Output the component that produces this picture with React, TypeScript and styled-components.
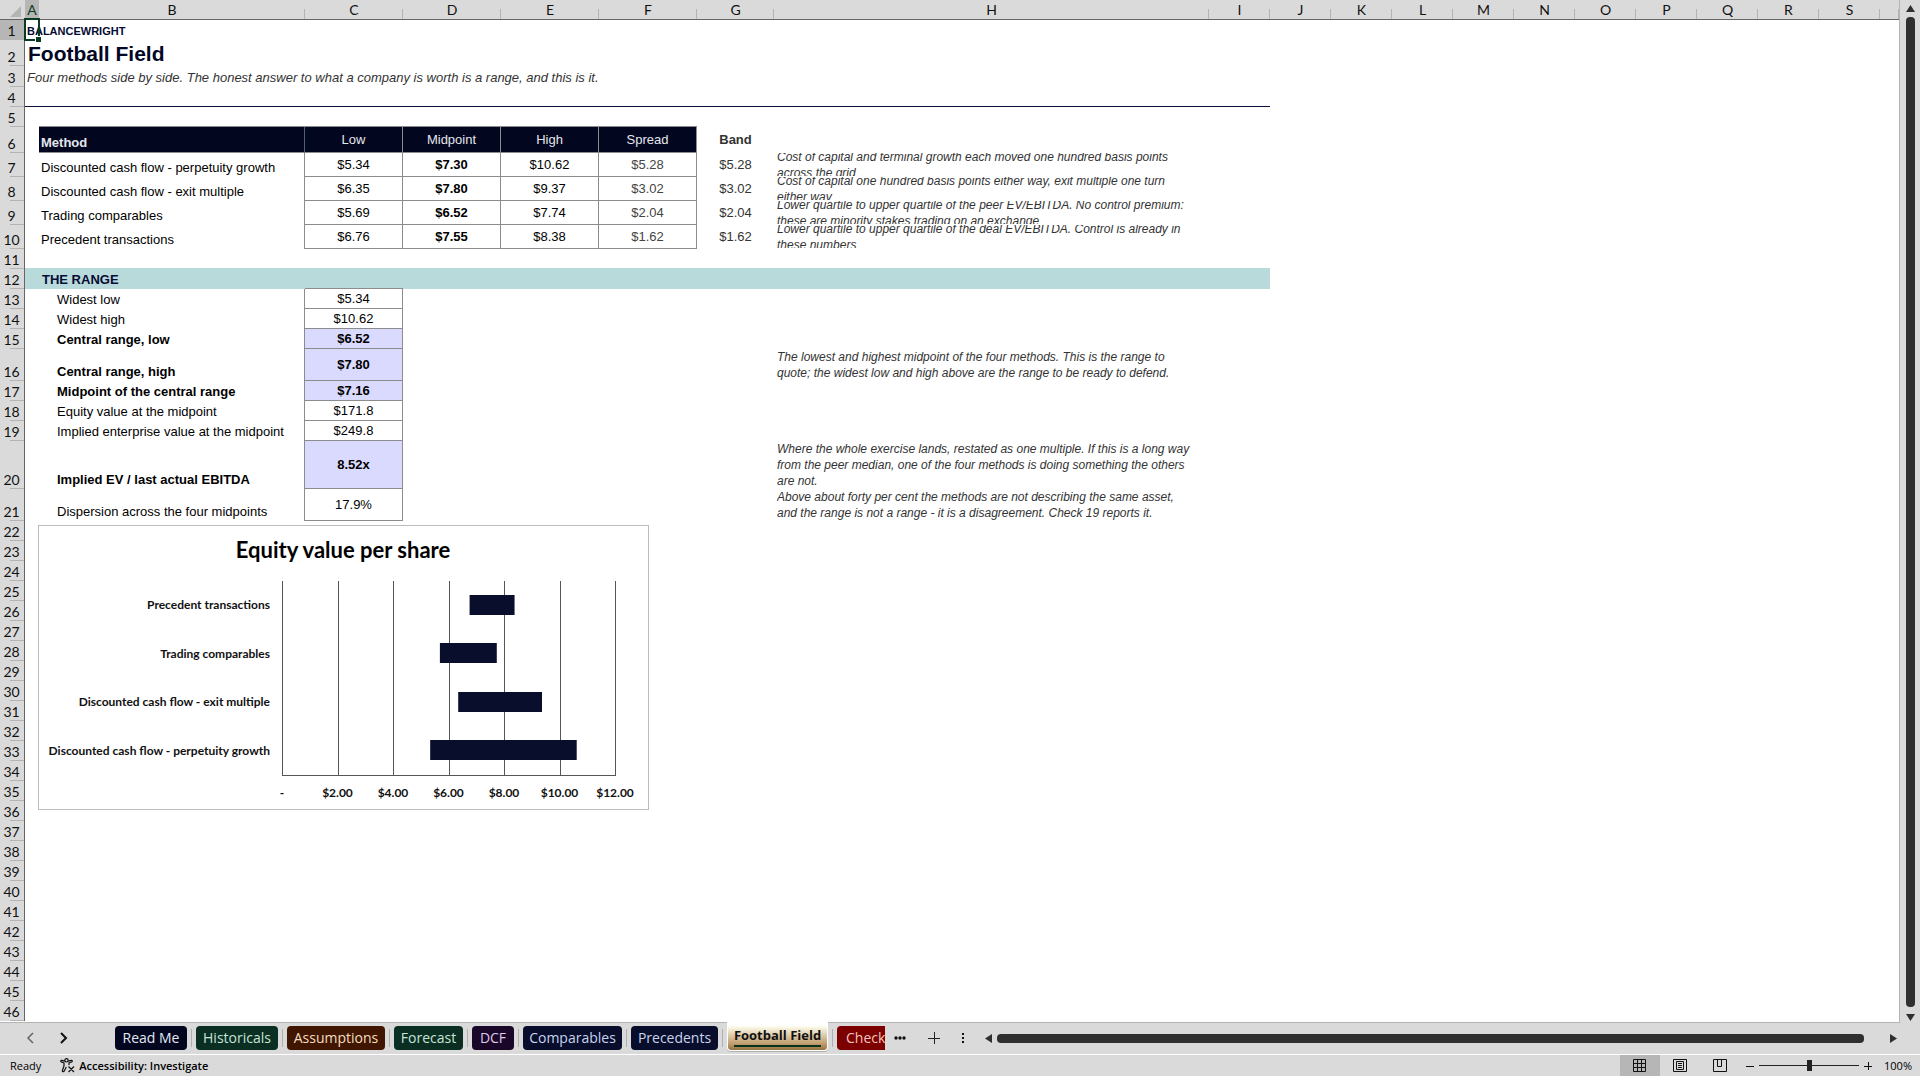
import React from "react";
import styled, { createGlobalStyle, css } from "styled-components";

const SANS = '"Liberation Sans", Arial, sans-serif';
const OFFICE = 'Lato, Calibri, sans-serif';
const UI = '"Open Sans", "Segoe UI", sans-serif';

const GlobalStyle = createGlobalStyle`
  *, *::before, *::after { box-sizing: border-box; }
  body { margin: 0; background: #dadada; color: #000; font-family: ${SANS}; font-size: 13px; }
  button { border: 0; padding: 0; background: none; color: inherit; font: inherit; }
`;

const Window = styled.main`
  display: flex;
  flex-direction: column;
  height: 100vh;
  overflow: hidden;
  background: #dadada;
`;

const Workspace = styled.div`
  display: flex;
  flex: 1;
  min-height: 0;
`;

const Sheet = styled.div`
  position: relative;
  flex: 1;
  min-width: 0;
  overflow: hidden;
  background: #fff;
  border-right: 1px solid #b4b4b4;
  border-bottom: 1px solid #b4b4b4;
`;

const Grid = styled.table`
  width: 100%;
  table-layout: fixed;
  border-collapse: separate;
  border-spacing: 0;
`;

const Col = styled.col<{ $w?: number }>`
  width: ${(p) => (p.$w ? `${p.$w}px` : "auto")};
`;

const ColumnHead = styled.th<{ $active?: boolean }>`
  height: 20px;
  padding: 0;
  border-bottom: 1px solid #666;
  background: ${(p) =>
    p.$active
      ? "#b6b6b6"
      : "linear-gradient(#b4b4b4, #b4b4b4) right bottom / 1px 10px no-repeat #dadada"};
  color: ${(p) => (p.$active ? "#0b3a22" : "#111")};
  font: 400 14px/18px ${OFFICE};
  vertical-align: bottom;
`;

const Corner = styled(ColumnHead)`
  background: #dadada;
  text-align: right;
  svg { display: block; margin: 0 4px 2px auto; }
`;

const RowHead = styled.th<{ $active?: boolean }>`
  padding: 0 1px 0 0;
  border-right: 1px solid #666;
  background: ${(p) =>
    p.$active
      ? "#b6b6b6"
      : "linear-gradient(#b4b4b4, #b4b4b4) right bottom / 14px 1px no-repeat #dadada"};
  color: #111;
  font: 400 14px/18px ${OFFICE};
  text-align: center;
  vertical-align: bottom;
`;

const Row = styled.tr<{ $h: number }>`
  height: ${(p) => p.$h}px;
`;

const Cell = styled.td<{ $indent?: number; $bold?: boolean }>`
  position: relative;
  padding: 0 0 0 ${(p) => p.$indent ?? 2}px;
  font-size: 13px;
  line-height: 18px;
  font-weight: ${(p) => (p.$bold ? 700 : 400)};
  vertical-align: bottom;
  white-space: nowrap;
`;

const BrandCell = styled(Cell)`
  color: #060c34;
  font-size: 11px;
  font-weight: 700;
`;

const TitleCell = styled(Cell)`
  color: #030726;
  font-size: 21px;
  line-height: 24px;
  font-weight: 700;
`;

const SubtitleCell = styled(Cell)`
  color: #333;
  font-style: italic;
`;

const RuleCell = styled.td`
  padding: 0;
  border-bottom: 1px solid #0a0f3c;
`;

const SectionCell = styled(Cell)`
  background: #b8dada;
  box-shadow: 0 -1px 0 #b8dada;
  color: #060c34;
  font-weight: 700;
`;

const boxed = css`
  border-right: 1px solid #8c8c8c;
  border-bottom: 1px solid #8c8c8c;
`;

const TableHead = styled(Cell)<{ $first?: boolean }>`
  ${boxed}
  background: #02061f;
  color: #e6e6ee;
  box-shadow: 0 -1px 0 #8c8c8c;
  ${(p) =>
    p.$first
      ? css`border-right-color: #4d6075;`
      : css`
          padding: 0;
          text-align: center;
          vertical-align: middle;
        `}
`;

const Value = styled(Cell)<{ $tone?: "muted" | "key"; $top?: boolean }>`
  ${boxed}
  padding: 0;
  text-align: center;
  vertical-align: middle;
  background: ${(p) => (p.$tone === "key" ? "#dadafe" : "#fff")};
  color: ${(p) => (p.$tone === "muted" ? "#444" : "#000")};
  box-shadow: -1px 0 0 #8c8c8c${(p) => (p.$top ? ", 0 -1px 0 #8c8c8c" : "")};
`;

const Band = styled(Cell)`
  padding: 0;
  color: #333;
  text-align: center;
  vertical-align: middle;
`;

const NoteCell = styled(Cell)`
  padding: 0 0 0 3px;
  vertical-align: top;
`;

const Note = styled.div<{ $h: number }>`
  display: flex;
  align-items: center;
  height: ${(p) => p.$h}px;
  overflow: hidden;
  color: #333;
  font-size: 12px;
  line-height: 16px;
  font-style: italic;
  white-space: pre;
`;

const Selection = styled.span`
  position: absolute;
  inset: -2px -1px -1px -1px;
  border: 2px solid #0b3a22;
  &::after {
    content: "";
    position: absolute;
    right: -3px;
    bottom: -3px;
    width: 6px;
    height: 6px;
    border: solid #fff;
    border-width: 1px 0 0 1px;
    background: #0b3a22;
  }
`;

const ChartFrame = styled.figure`
  position: absolute;
  left: 38px;
  top: 525px;
  margin: 0;
  border: 1px solid #bcbcbc;
  background: #fff;
  svg { display: block; }
  text { font-family: ${OFFICE}; font-weight: 700; font-size: 12px; fill: #111; }
  .title { font-size: 22px; fill: #000; }
`;

const VScroll = styled.div`
  display: flex;
  flex-direction: column;
  align-items: center;
  width: 20px;
  padding: 5px 0 2px;
  gap: 5px;
  button, svg { display: block; }
`;

const Thumb = styled.div<{ $vertical?: boolean }>`
  flex: 1;
  border-radius: 4px;
  background: #2f2f2f;
  ${(p) => (p.$vertical ? "width: 9px; margin-bottom: 2px;" : "height: 9px;")}
`;

const TabBar = styled.div`
  display: flex;
  align-items: center;
  height: 32px;
  padding-bottom: 1px;
  border-bottom: 1px solid #fff;
`;

const Arrows = styled.div`
  display: flex;
  justify-content: center;
  gap: 19px;
  width: 93px;
  margin-right: 22px;
  svg { display: block; }
`;

const Tabs = styled.nav`
  display: flex;
  align-items: center;
  width: 770px;
  height: 30px;
  overflow-x: clip;
`;

const Divider = styled.span`
  flex: none;
  width: 1px;
  height: 18px;
  margin: 0 4px;
  background: #b0b0b0;
`;

const Tab = styled.button<{ $w: number; $bg: string; $fg: string }>`
  flex: none;
  width: ${(p) => p.$w}px;
  height: 24px;
  border-radius: 4px;
  background: ${(p) => p.$bg};
  color: ${(p) => p.$fg};
  font: 400 14px/24px ${UI};
  text-align: center;
  white-space: nowrap;
`;

const ActiveTab = styled(Tab)`
  position: relative;
  align-self: flex-start;
  height: 29px;
  margin-top: -1px;
  padding-bottom: 5px;
  border: solid #fff;
  border-width: 4px 1px 1px;
  border-radius: 0 0 4px 4px;
  box-shadow: 0 1px 0 #b0b0b0;
  background-clip: padding-box;
  font-size: 13px;
  font-weight: 700;
  line-height: 19px;
  &::after {
    content: "";
    position: absolute;
    left: 6px;
    right: 6px;
    bottom: 3px;
    height: 2px;
    background: #06331c;
  }
`;

const TabTools = styled.div`
  display: flex;
  align-items: center;
  justify-content: space-between;
  width: 84px;
  padding: 0 4px 0 9px;
  svg { display: block; }
`;

const HScroll = styled.div`
  display: flex;
  flex: 1;
  align-items: center;
  gap: 5px;
  padding: 0 23px 0 16px;
  svg { display: block; }
`;

const HTrack = styled.div`
  display: flex;
  flex: 1;
  margin-right: 21px;
`;

const StatusBar = styled.footer`
  display: flex;
  align-items: center;
  height: 21px;
  padding: 0 8px 0 10px;
  font: 400 11px/20px ${UI};
`;

const Access = styled.button`
  display: flex;
  align-items: center;
  gap: 4px;
  margin: 0 auto 0 19px;
  font-weight: 600;
`;

const ViewButton = styled.button<{ $on?: boolean }>`
  display: flex;
  align-items: center;
  justify-content: center;
  width: 40px;
  height: 21px;
  background: ${(p) => (p.$on ? "#b6b6b6" : "transparent")};
`;

const ZoomGroup = styled.div`
  display: flex;
  align-items: center;
  gap: 5px;
  margin-left: 6px;
  svg { display: block; }
`;

const Slider = styled.input`
  width: 100px;
  height: 12px;
  margin: 0;
  appearance: none;
  background: linear-gradient(#222, #222) center / 100% 1px no-repeat;
  &::-webkit-slider-thumb {
    appearance: none;
    width: 5px;
    height: 11px;
    background: #222;
  }
`;

const ZoomValue = styled.button`
  width: 40px;
  text-align: right;
`;

const COLUMNS: [string, number?][] = [
  ["A", 14], ["B", 266], ["C", 98], ["D", 98], ["E", 98], ["F", 98], ["G", 77], ["H", 435],
  ["I", 61], ["J", 61], ["K", 61], ["L", 61], ["M", 61], ["N", 61], ["O", 61], ["P", 61],
  ["Q", 61], ["R", 61], ["S", 61], ["", undefined],
];

const METHODS = [
  { name: "Discounted cash flow - perpetuity growth", low: "$5.34", mid: "$7.30", high: "$10.62", spread: "$5.28", from: 5.34, to: 10.62,
    note: "Cost of capital and terminal growth each moved one hundred basis points\nacross the grid" },
  { name: "Discounted cash flow - exit multiple", low: "$6.35", mid: "$7.80", high: "$9.37", spread: "$3.02", from: 6.35, to: 9.37,
    note: "Cost of capital one hundred basis points either way, exit multiple one turn\neither way" },
  { name: "Trading comparables", low: "$5.69", mid: "$6.52", high: "$7.74", spread: "$2.04", from: 5.69, to: 7.74,
    note: "Lower quartile to upper quartile of the peer EV/EBITDA. No control premium:\nthese are minority stakes trading on an exchange" },
  { name: "Precedent transactions", low: "$6.76", mid: "$7.55", high: "$8.38", spread: "$1.62", from: 6.76, to: 8.38,
    note: "Lower quartile to upper quartile of the deal EV/EBITDA. Control is already in\nthese numbers" },
];

const RANGE: { label: string; value: string; h: number; key?: boolean; note?: string }[] = [
  { label: "Widest low", value: "$5.34", h: 20 },
  { label: "Widest high", value: "$10.62", h: 20 },
  { label: "Central range, low", value: "$6.52", h: 20, key: true },
  { label: "Central range, high", value: "$7.80", h: 32, key: true,
    note: "The lowest and highest midpoint of the four methods. This is the range to\nquote; the widest low and high above are the range to be ready to defend." },
  { label: "Midpoint of the central range", value: "$7.16", h: 20, key: true },
  { label: "Equity value at the midpoint", value: "$171.8", h: 20 },
  { label: "Implied enterprise value at the midpoint", value: "$249.8", h: 20 },
  { label: "Implied EV / last actual EBITDA", value: "8.52x", h: 48, key: true,
    note: "Where the whole exercise lands, restated as one multiple. If this is a long way\nfrom the peer median, one of the four methods is doing something the others\nare not." },
  { label: "Dispersion across the four midpoints", value: "17.9%", h: 32,
    note: "Above about forty per cent the methods are not describing the same asset,\nand the range is not a range - it is a disagreement. Check 19 reports it." },
];

const TABS = [
  { name: "Read Me", w: 72, bg: "#02061f", fg: "#e4e8f4" },
  { name: "Historicals", w: 82, bg: "#0a2e22", fg: "#c8e4d8" },
  { name: "Assumptions", w: 98, bg: "#401600", fg: "#f4dcc4" },
  { name: "Forecast", w: 69, bg: "#0a2e22", fg: "#c8e4d8" },
  { name: "DCF", w: 42, bg: "#1a0628", fg: "#dcc8e8" },
  { name: "Comparables", w: 99, bg: "#070d2b", fg: "#c8d4ec" },
  { name: "Precedents", w: 87, bg: "#070d2b", fg: "#c8d4ec" },
  { name: "Football Field", w: 101, bg: "linear-gradient(#fffff0 0, #e0d0b0 35%, #c09a6c 75%, #94703f)", fg: "#111", active: true },
  { name: "Checks", w: 64, bg: "#7c0000", fg: "#f4c4bc" },
];

function Triangle({ dir }: { dir: "up" | "down" | "left" | "right" }) {
  const d = {
    up: "M4.5 0 9 7H0Z",
    down: "M0 0H9L4.5 7Z",
    left: "M7 0V9L0 4.5Z",
    right: "M0 0 7 4.5 0 9Z",
  }[dir];
  const tall = dir === "left" || dir === "right";
  return (
    <svg width={tall ? 7 : 9} height={tall ? 9 : 7} aria-hidden="true">
      <path d={d} fill="#2f2f2f" />
    </svg>
  );
}

function FootballChart() {
  const left = 243;
  const top = 55;
  const unit = 333 / 12;
  const bottom = 249;
  const slot = (bottom - top) / 4;
  const ticks = [0, 2, 4, 6, 8, 10, 12];
  return (
    <ChartFrame aria-label="Equity value per share">
      <svg width="609" height="283">
        <text className="title" x="304" y="32" textAnchor="middle">Equity value per share</text>
        {ticks.map((t) => (
          <g key={t}>
            <path d={`M${Math.round(left + t * unit) + 0.5} ${top}V${bottom}`} stroke="#555" />
            <text x={left + t * unit} y="271" textAnchor="middle">{t ? `$${t}.00` : "-"}</text>
          </g>
        ))}
        <path d={`M${left} ${bottom + 0.5}H${left + 334}`} stroke="#555" />
        {[...METHODS].reverse().map((m, i) => (
          <g key={m.name}>
            <text x={left - 12} y={top + slot * (i + 0.5) + 4} textAnchor="end">{m.name}</text>
            <rect
              x={left + m.from * unit}
              y={Math.floor(top + slot * (i + 0.5) - 10)}
              width={(m.to - m.from) * unit}
              height="20"
              fill="#080e2c"
            />
          </g>
        ))}
      </svg>
    </ChartFrame>
  );
}

function Spreadsheet() {
  return (
    <Sheet>
      <Grid>
        <colgroup>
          <Col $w={25} />
          {COLUMNS.map(([n, w], i) => <Col key={n || i} $w={w} />)}
        </colgroup>
        <thead>
          <tr>
            <Corner>
              <svg width="11" height="11" aria-hidden="true"><path d="M11 0V11H0Z" fill="#b4b4b4" /></svg>
            </Corner>
            {COLUMNS.map(([n], i) => <ColumnHead key={n || i} $active={n === "A"}>{n}</ColumnHead>)}
          </tr>
        </thead>
        <tbody>
          <Row $h={20}><RowHead $active>1</RowHead><BrandCell>BALANCEWRIGHT<Selection /></BrandCell></Row>
          <Row $h={26}><RowHead>2</RowHead><TitleCell $indent={3}>Football Field</TitleCell></Row>
          <Row $h={21}><RowHead>3</RowHead><SubtitleCell>Four methods side by side. The honest answer to what a company is worth is a range, and this is it.</SubtitleCell></Row>
          <Row $h={20}><RowHead>4</RowHead><RuleCell colSpan={9} /></Row>
          <Row $h={20}><RowHead>5</RowHead></Row>
          <Row $h={26}>
            <RowHead>6</RowHead>
            <td />
            <TableHead $first $bold>Method</TableHead>
            {["Low", "Midpoint", "High", "Spread"].map((h) => <TableHead key={h}>{h}</TableHead>)}
            <Band $bold>Band</Band>
          </Row>
          {METHODS.map((m, i) => (
            <Row key={m.name} $h={24}>
              <RowHead>{i + 7}</RowHead>
              <td />
              <Cell>{m.name}</Cell>
              <Value>{m.low}</Value>
              <Value $bold>{m.mid}</Value>
              <Value>{m.high}</Value>
              <Value $tone="muted">{m.spread}</Value>
              <Band>{m.spread}</Band>
              <NoteCell><Note $h={23}>{m.note}</Note></NoteCell>
            </Row>
          ))}
          <Row $h={20}><RowHead>11</RowHead></Row>
          <Row $h={20}><RowHead>12</RowHead><SectionCell colSpan={9} $indent={17}>THE RANGE</SectionCell></Row>
          {RANGE.map((r, i) => (
            <Row key={r.label} $h={r.h}>
              <RowHead>{i + 13}</RowHead>
              <td />
              <Cell $indent={18} $bold={r.key}>{r.label}</Cell>
              <Value $tone={r.key ? "key" : undefined} $bold={r.key} $top={i === 0}>{r.value}</Value>
              <td colSpan={4} />
              {r.note ? <NoteCell><Note $h={r.h}>{r.note}</Note></NoteCell> : <td />}
            </Row>
          ))}
          {Array.from({ length: 25 }, (_, i) => (
            <Row key={i} $h={20}><RowHead>{i + 22}</RowHead></Row>
          ))}
        </tbody>
      </Grid>
      <FootballChart />
    </Sheet>
  );
}

export default function App() {
  return (
    <Window>
      <GlobalStyle />
      <Workspace>
        <Spreadsheet />
        <VScroll>
          <button aria-label="Scroll up"><Triangle dir="up" /></button>
          <Thumb $vertical />
          <button aria-label="Scroll down"><Triangle dir="down" /></button>
        </VScroll>
      </Workspace>
      <TabBar>
        <Arrows>
          <button aria-label="Previous sheet">
            <svg width="14" height="12" fill="none" stroke="#666" strokeWidth="1.5"><path d="M10 1 5 6l5 5" /></svg>
          </button>
          <button aria-label="Next sheet">
            <svg width="14" height="12" fill="none" stroke="#111" strokeWidth="2"><path d="M5 1l5 5-5 5" /></svg>
          </button>
        </Arrows>
        <Tabs>
          {TABS.map((t, i) => {
            const Kind = t.active ? ActiveTab : Tab;
            return (
              <React.Fragment key={t.name}>
                {i > 0 && <Divider />}
                <Kind $w={t.w} $bg={t.bg} $fg={t.fg}>{t.name}</Kind>
              </React.Fragment>
            );
          })}
        </Tabs>
        <TabTools>
          <button aria-label="More sheets">
            <svg width="12" height="4" fill="#111"><circle cx="2" cy="2" r="1.7" /><circle cx="6" cy="2" r="1.7" /><circle cx="10" cy="2" r="1.7" /></svg>
          </button>
          <button aria-label="New sheet">
            <svg width="12" height="12" stroke="#222"><path d="M0 6.5H12M6.5 0V12" /></svg>
          </button>
          <button aria-label="Resize tabs">
            <svg width="4" height="12" fill="#111"><path d="M1 1h2v2H1zM1 5h2v2H1zM1 9h2v2H1z" /></svg>
          </button>
        </TabTools>
        <HScroll>
          <button aria-label="Scroll left"><Triangle dir="left" /></button>
          <HTrack><Thumb /></HTrack>
          <button aria-label="Scroll right"><Triangle dir="right" /></button>
        </HScroll>
      </TabBar>
      <StatusBar>
        <span>Ready</span>
        <Access>
          <svg width="15" height="15" viewBox="0 0 15 15" fill="none" stroke="#111" strokeWidth="1.2" aria-hidden="true">
            <circle cx="6.5" cy="2.3" r="1.7" />
            <path d="M4.8 3.2 1.6 2.3C.6 2.2.4 3.6 1.4 4L4 5v3l-1.6 4.500c-.2 1.200 1.200 1.600 1.700.7L6.300 9M8.200 3.200l3.200-.9c1-.1 1.200 1.300.2 1.700L9 5v2M8.500 8.500l5.500 5.500M14 8.500 8.500 14" />
          </svg>
          Accessibility: Investigate
        </Access>
        <ViewButton $on aria-label="Normal view">
          <svg width="14" height="14" fill="none" stroke="#111"><path d="M.5.5h12v12H.5zM4.500.5v12M8.500.5v12M.5 4.500h12M.5 8.500h12" /></svg>
        </ViewButton>
        <ViewButton aria-label="Page layout">
          <svg width="14" height="14" fill="none" stroke="#111"><path d="M.5.5h13v12H.5zM3.500 2.500h7v8h-7zM5 4.500h4M5 6.500h4M5 8.500h4" /></svg>
        </ViewButton>
        <ViewButton aria-label="Page break preview">
          <svg width="14" height="14" fill="none" stroke="#111"><path d="M.5.5h13v12H.5zM4.500.5v7h4v-7" /></svg>
        </ViewButton>
        <ZoomGroup>
          <button aria-label="Zoom out"><svg width="8" height="8" stroke="#111"><path d="M0 4.500H8" /></svg></button>
          <Slider type="range" min="0" max="100" defaultValue="50" aria-label="Zoom" />
          <button aria-label="Zoom in"><svg width="8" height="8" stroke="#111"><path d="M0 4.500H8M4.500 0V8" /></svg></button>
        </ZoomGroup>
        <ZoomValue>100%</ZoomValue>
      </StatusBar>
    </Window>
  );
}
